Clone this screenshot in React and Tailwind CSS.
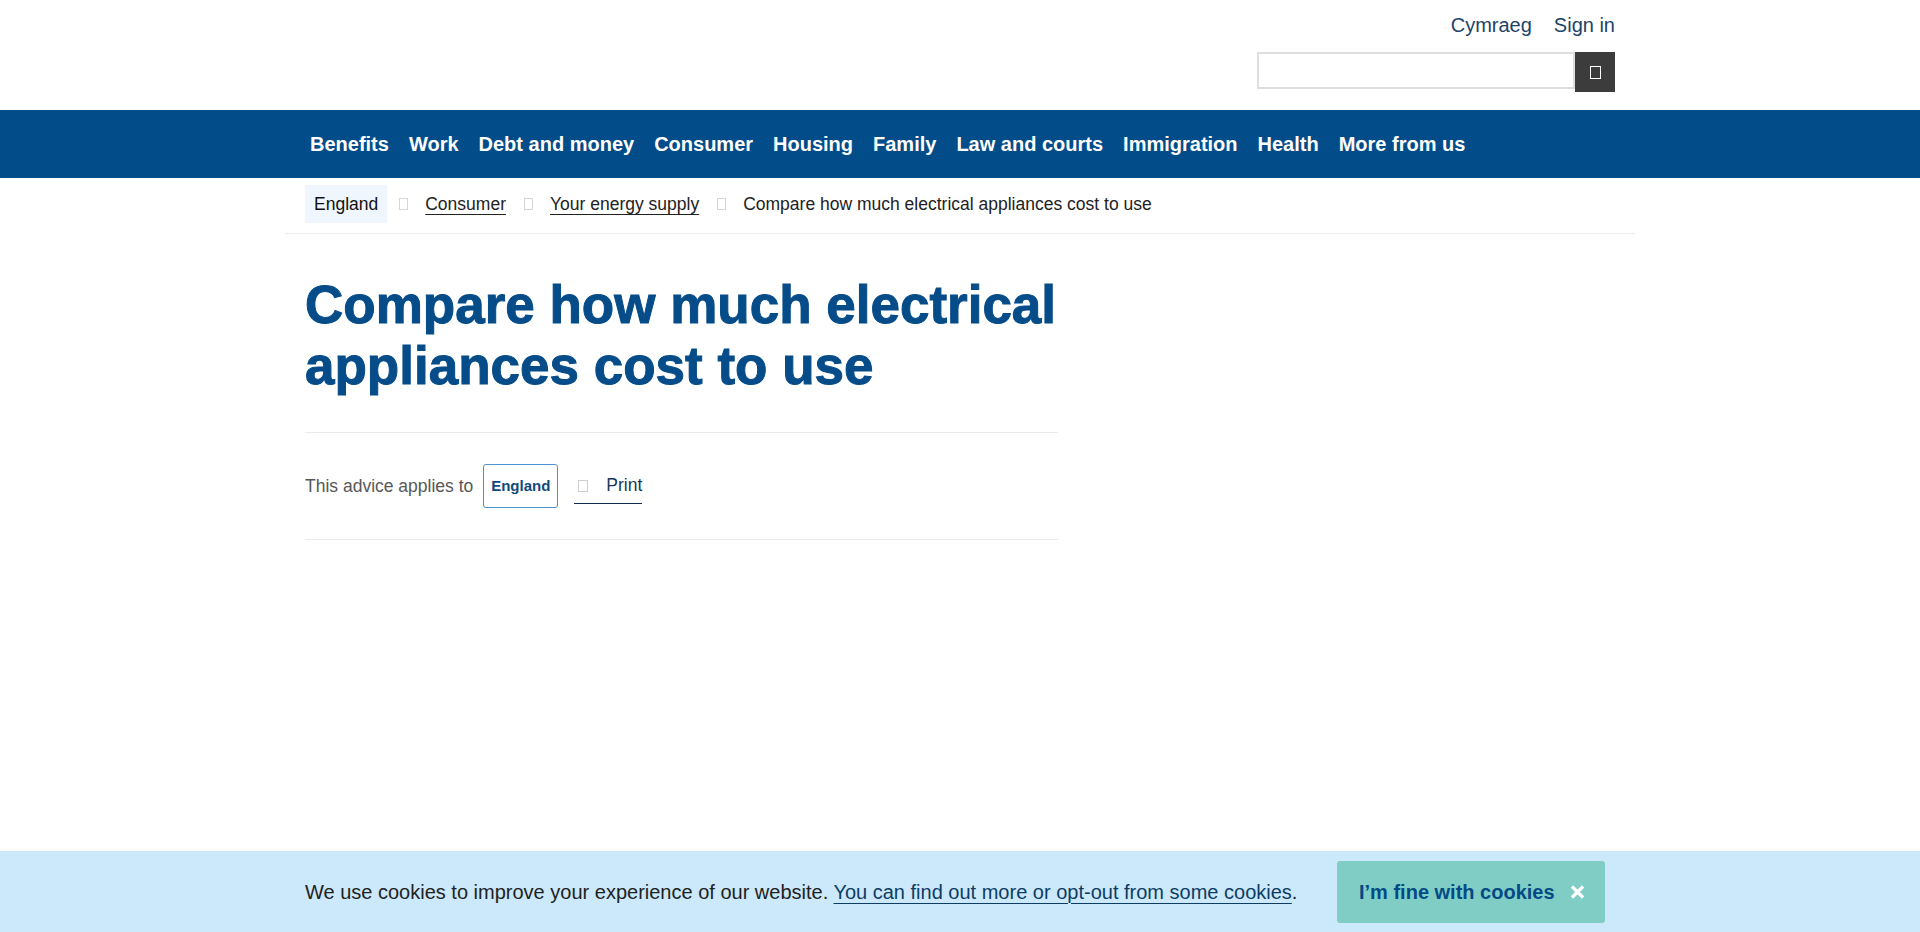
import React from "react";

function Box({ className }) {
  return <span className={"inline-block shrink-0 border " + className} />;
}

export default function App() {
  const nav = [
    "Benefits",
    "Work",
    "Debt and money",
    "Consumer",
    "Housing",
    "Family",
    "Law and courts",
    "Immigration",
    "Health",
    "More from us",
  ];
  return (
    <div className="min-h-[932px] bg-white font-['Liberation_Sans',Arial,sans-serif] text-[#222]">
      {/* Header */}
      <header className="h-[110px]">
        <div className="mx-auto w-[1350px] px-[20px] pt-[13px] flex flex-col items-end">
          <div className="flex gap-[22px] text-[20px] leading-[24px] text-[#1d4467]">
            <a>Cymraeg</a>
            <a>Sign in</a>
          </div>
          <div className="mt-[15px] flex items-start">
            <div className="w-[318px] h-[37px] border-2 border-[#dedede] bg-white" />
            <button className="w-[40px] h-[40px] bg-[#3c3c3c] flex items-center justify-center">
              <Box className="w-[11px] h-[13px] border-white" />
            </button>
          </div>
        </div>
      </header>

      {/* Nav */}
      <nav className="bg-[#024c89] h-[68px]">
        <div className="mx-auto w-[1350px] px-[20px] h-full">
          <ul className="flex items-center h-full gap-[20px] pl-[5px] text-white font-bold text-[20px]">
            {nav.map((n) => (
              <li key={n} className="whitespace-nowrap">
                {n}
              </li>
            ))}
          </ul>
        </div>
      </nav>

      {/* Breadcrumb */}
      <div className="mx-auto w-[1350px] border-b border-[#ececec]">
        <div className="px-[20px] pt-[7px] pb-[10px] flex items-center text-[17.5px] leading-[22px]">
          <span className="bg-[#eff6fd] px-[9px] h-[38px] flex items-center text-[#111]">England</span>
          <Box className="ml-[12px] mr-[17px] w-[9px] h-[12px] border-[#d6d6d6]" />
          <a className="underline decoration-1 underline-offset-[4px] text-[#222]">Consumer</a>
          <Box className="ml-[18px] mr-[17px] w-[9px] h-[12px] border-[#d6d6d6]" />
          <a className="underline decoration-1 underline-offset-[4px] text-[#222]">Your energy supply</a>
          <Box className="ml-[18px] mr-[17px] w-[9px] h-[12px] border-[#d6d6d6]" />
          <span className="text-[#222]">Compare how much electrical appliances cost to use</span>
        </div>
      </div>

      {/* Main */}
      <main className="mx-auto w-[1350px] px-[20px]">
        <div className="w-[753px]">
          <h1 className="mt-[40px] text-[53px] leading-[61px] font-bold text-[#054c89] [-webkit-text-stroke:1px_#054c89]">
            Compare how much electrical
            <br />
            appliances cost to use
          </h1>
          <div className="mt-[36px] border-t border-[#ebebeb]" />
          <div className="py-[31px] flex items-center text-[17.5px]">
            <span className="text-[#585858]">This advice applies to</span>
            <span className="ml-[10px] h-[44px] w-[75px] flex items-center justify-center border border-[#4c92d0] rounded-[3px] text-[15px] font-bold text-[#0f4a7c]">
              England
            </span>
            <a className="ml-[16px] flex items-center pl-[4px] h-[35px] border-b-[1.5px] border-[#0b2d4f] text-[#15385a]">
              <Box className="w-[10px] h-[12px] border-[#cfcfcf]" />
              <span className="ml-[18px]">Print</span>
            </a>
          </div>
          <div className="border-t border-[#ebebeb]" />
        </div>
      </main>

      {/* Cookie banner */}
      <div className="fixed bottom-0 left-0 right-0 h-[81px] bg-[#cce8fb]">
        <div className="mx-auto w-[1350px] px-[20px] h-full flex items-center">
          <p className="text-[20px] text-[#222]">
            We use cookies to improve your experience of our website.{" "}
            <a className="text-[#0d3d65] underline decoration-1 underline-offset-[4px]">
              You can find out more or opt-out from some cookies
            </a>
            .
          </p>
          <button className="ml-auto mr-[10px] h-[62px] w-[268px] rounded-[3px] bg-[#80cdc6] flex items-center pl-[22px] text-[20px] font-bold text-[#054a84]">
            I’m fine with cookies
            <svg className="ml-[15px]" width="15" height="14" viewBox="0 0 15 14">
              <path d="M2 1.5 L13 12.5 M13 1.5 L2 12.5" stroke="white" strokeWidth="3.2" strokeLinecap="butt" />
            </svg>
          </button>
        </div>
      </div>
    </div>
  );
}
